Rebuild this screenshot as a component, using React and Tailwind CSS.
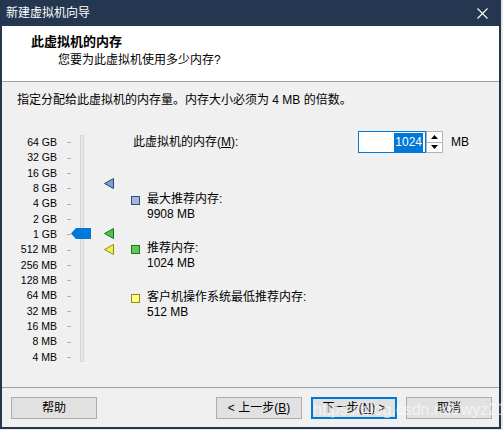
import React from "react";

const ui = { fontFamily: '"Liberation Sans", "Noto Sans CJK SC", sans-serif' };

const scale = [
  "64 GB", "32 GB", "16 GB", "8 GB", "4 GB", "2 GB", "1 GB",
  "512 MB", "256 MB", "128 MB", "64 MB", "32 MB", "16 MB", "8 MB", "4 MB",
];

function Marker({ fill, stroke, top }) {
  return (
    <svg className="absolute left-[102px]" style={{ top }} width="10" height="11" viewBox="0 0 10 11">
      <polygon points="9.5,0.5 9.5,10.5 0.5,5.5" fill={fill} stroke={stroke} strokeWidth="1" />
    </svg>
  );
}

function Legend({ fill, stroke, label, value }) {
  return (
    <div className="flex items-start gap-[7px]">
      <span className="mt-[4px] h-[9px] w-[9px] border" style={{ background: fill, borderColor: stroke }} />
      <div className="text-[12px] leading-[15px] text-black">
        <div>{label}</div>
        <div>{value}</div>
      </div>
    </div>
  );
}

function Button({ children, primary }) {
  return (
    <button
      type="button"
      className={`h-[22px] w-[86px] bg-[#e1e1e1] text-[12px] text-black ${primary ? "border-2 border-[#0078d7]" : "border border-[#adadad]"}`}
    >
      {children}
    </button>
  );
}

export default function App() {
  return (
    <div className="h-[430px] w-[503px] bg-[#e6e6e6]" style={ui}>
      <div className="flex h-[429px] w-[501px] flex-col border-x-2 border-b-2 border-[#253750] bg-[#f0f0f0]">
        <div className="flex h-[26px] shrink-0 items-center justify-between bg-[#253750] pl-[4px] pr-[11px] text-[12px] text-white">
          <span>新建虚拟机向导</span>
          <svg width="11" height="11" viewBox="0 0 11 11">
            <path d="M0.5 0.5 L10.5 10.5 M10.5 0.5 L0.5 10.5" stroke="white" strokeWidth="1.1" />
          </svg>
        </div>

        <div className="h-[55px] shrink-0 bg-white pl-[29px] pt-[8px]">
          <div className="text-[13px] font-bold leading-[16px] text-black">此虚拟机的内存</div>
          <div className="mt-[2px] pl-[27px] text-[12px] leading-[16px] text-black">您要为此虚拟机使用多少内存?</div>
        </div>
        <div className="h-px shrink-0 bg-[#a0a0a0]" />

        <div className="flex-1">
          <div className="pl-[15px] pt-[10px] text-[12px] leading-[16px] text-black">
            指定分配给此虚拟机的内存量。内存大小必须为 4 MB 的倍数。
          </div>

          <div className="mt-[20px] flex">
            <div className="relative h-[240px] w-[129px] shrink-0">
              <div className="flex flex-col pl-[9px] pt-[7px]">
                {scale.map((s) => (
                  <div key={s} className="flex h-[15.36px] items-center">
                    <span className="w-[46px] text-right text-[10.5px] text-black">{s}</span>
                    <span className="ml-[10px] h-px w-[4px] bg-[#b0b0b0]" />
                  </div>
                ))}
              </div>
              <div className="absolute left-[78px] top-[7px] h-[227px] w-[4px] border border-[#d6d6d6] bg-[#e7e7e7]" />
              <svg className="absolute left-[69px] top-[100px]" width="20" height="11" viewBox="0 0 20 11">
                <polygon points="0,5.5 5,0 20,0 20,11 5,11" fill="#0078d7" />
              </svg>
              <Marker fill="#7f9fcc" stroke="#26467a" top="50px" />
              <Marker fill="#52c24a" stroke="#17761a" top="100px" />
              <Marker fill="#f4ef50" stroke="#8d8a18" top="116px" />
            </div>

            <div className="flex flex-col">
              <div className="mt-[3px] flex h-[22px] items-center">
                <span className="w-[227px] pl-[2px] text-[12px] text-black">
                  此虚拟机的内存(<span className="underline">M</span>):
                </span>
                <div className="flex h-[22px] w-[68px] items-center justify-end border border-[#0078d7] bg-white pr-[2px]">
                  <span className="bg-[#0078d7] px-[1px] text-[12px] leading-[19px] text-white">1024</span>
                </div>
                <div className="flex h-[22px] w-[17px] flex-col border border-[#b4b4b4] bg-white">
                  <div className="flex flex-1 items-center justify-center border-b border-[#b4b4b4]">
                    <svg width="7" height="4" viewBox="0 0 7 4"><polygon points="3.5,0 7,4 0,4" fill="#000" /></svg>
                  </div>
                  <div className="flex flex-1 items-center justify-center">
                    <svg width="7" height="4" viewBox="0 0 7 4"><polygon points="0,0 7,0 3.5,4" fill="#000" /></svg>
                  </div>
                </div>
                <span className="ml-[8px] text-[12px] text-black">MB</span>
              </div>

              <div className="mt-[39px] flex flex-col gap-[19px]">
                <Legend fill="#a3b6d4" stroke="#2c4d7e" label="最大推荐内存:" value="9908 MB" />
                <Legend fill="#5bc95b" stroke="#1a7a1a" label="推荐内存:" value="1024 MB" />
                <Legend fill="#ffff80" stroke="#8a8a20" label="客户机操作系统最低推荐内存:" value="512 MB" />
              </div>
            </div>
          </div>
        </div>

        <div className="h-px shrink-0 bg-[#a0a0a0]" />
        <div className="relative flex h-[39px] shrink-0 items-start pl-[9px] pr-[7px] pt-[9px]">
          <Button>帮助</Button>
          <div className="ml-auto flex gap-[9px]">
            <Button>&lt; 上一步(<span className="underline">B</span>)</Button>
            <Button primary>下一步(<span className="underline">N</span>) &gt;</Button>
            <Button>取消</Button>
          </div>
          <span className="pointer-events-none absolute left-[311px] top-[10px] text-[16px] text-white opacity-60">
            https://blog.csdn.net/wyz21
          </span>
        </div>
      </div>
    </div>
  );
}
